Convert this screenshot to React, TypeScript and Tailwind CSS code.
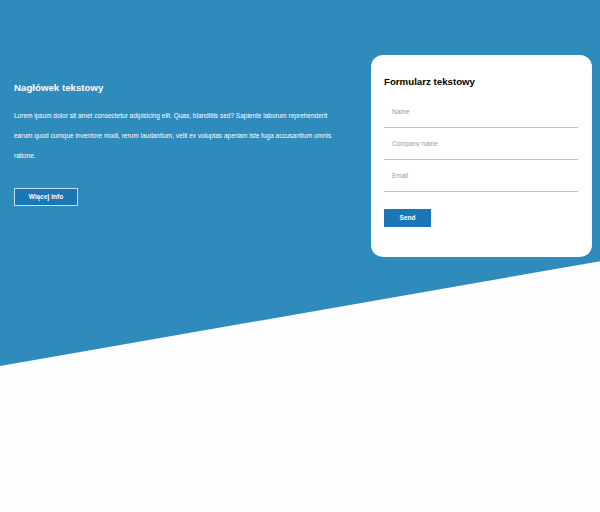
import React from "react";

const fields = ["Name", "Company name", "Email"];

const App: React.FC = () => {
  return (
    <div className="w-full h-[512px] bg-[#fdfcff] font-['Liberation_Sans',Arial,sans-serif]">
      <section className="h-[366px] bg-[#2f8bbc] [clip-path:polygon(0_0,100%_0,100%_71.4%,0_100%)] flex justify-between items-start pt-[55px] pl-[14px] pr-[8px]">
        <div className="mt-[27px] w-[330px] text-white">
          <h1 className="text-[9.7px] leading-[12px] font-bold">Nagłówek tekstowy</h1>
          <p className="mt-[12px] text-[6.5px] leading-[20px]">
            Lorem ipsum dolor sit amet consectetur adipisicing elit. Quas, blanditiis sed? Sapiente laborum
            reprehenderit earum quod cumque inventore modi, rerum laudantium, velit ex voluptas aperiam iste fuga
            accusantium omnis ratione.
          </p>
          <button className="mt-[22px] w-[64px] h-[18px] bg-[#1b76b8] border border-[#c9dced] text-[6.5px] font-semibold text-white">
            Więcej info
          </button>
        </div>

        <div className="w-[221px] h-[202px] bg-white rounded-[12px] pt-[21px] pl-[13px] pr-[14px]">
          <h2 className="text-[9.7px] leading-[12px] font-bold text-black">Formularz tekstowy</h2>
          <form className="mt-[8px] flex flex-col">
            {fields.map((f) => (
              <input
                key={f}
                placeholder={f}
                className="h-[32px] pl-[8px] text-[6.5px] border-b border-[#c4c4c4] outline-none placeholder:text-[#9a9a9a]"
              />
            ))}
            <button
              type="button"
              className="mt-[17px] w-[47px] h-[18px] bg-[#1b76b8] text-white text-[6.5px] font-semibold"
            >
              Send
            </button>
          </form>
        </div>
      </section>
    </div>
  );
};

export default App;
